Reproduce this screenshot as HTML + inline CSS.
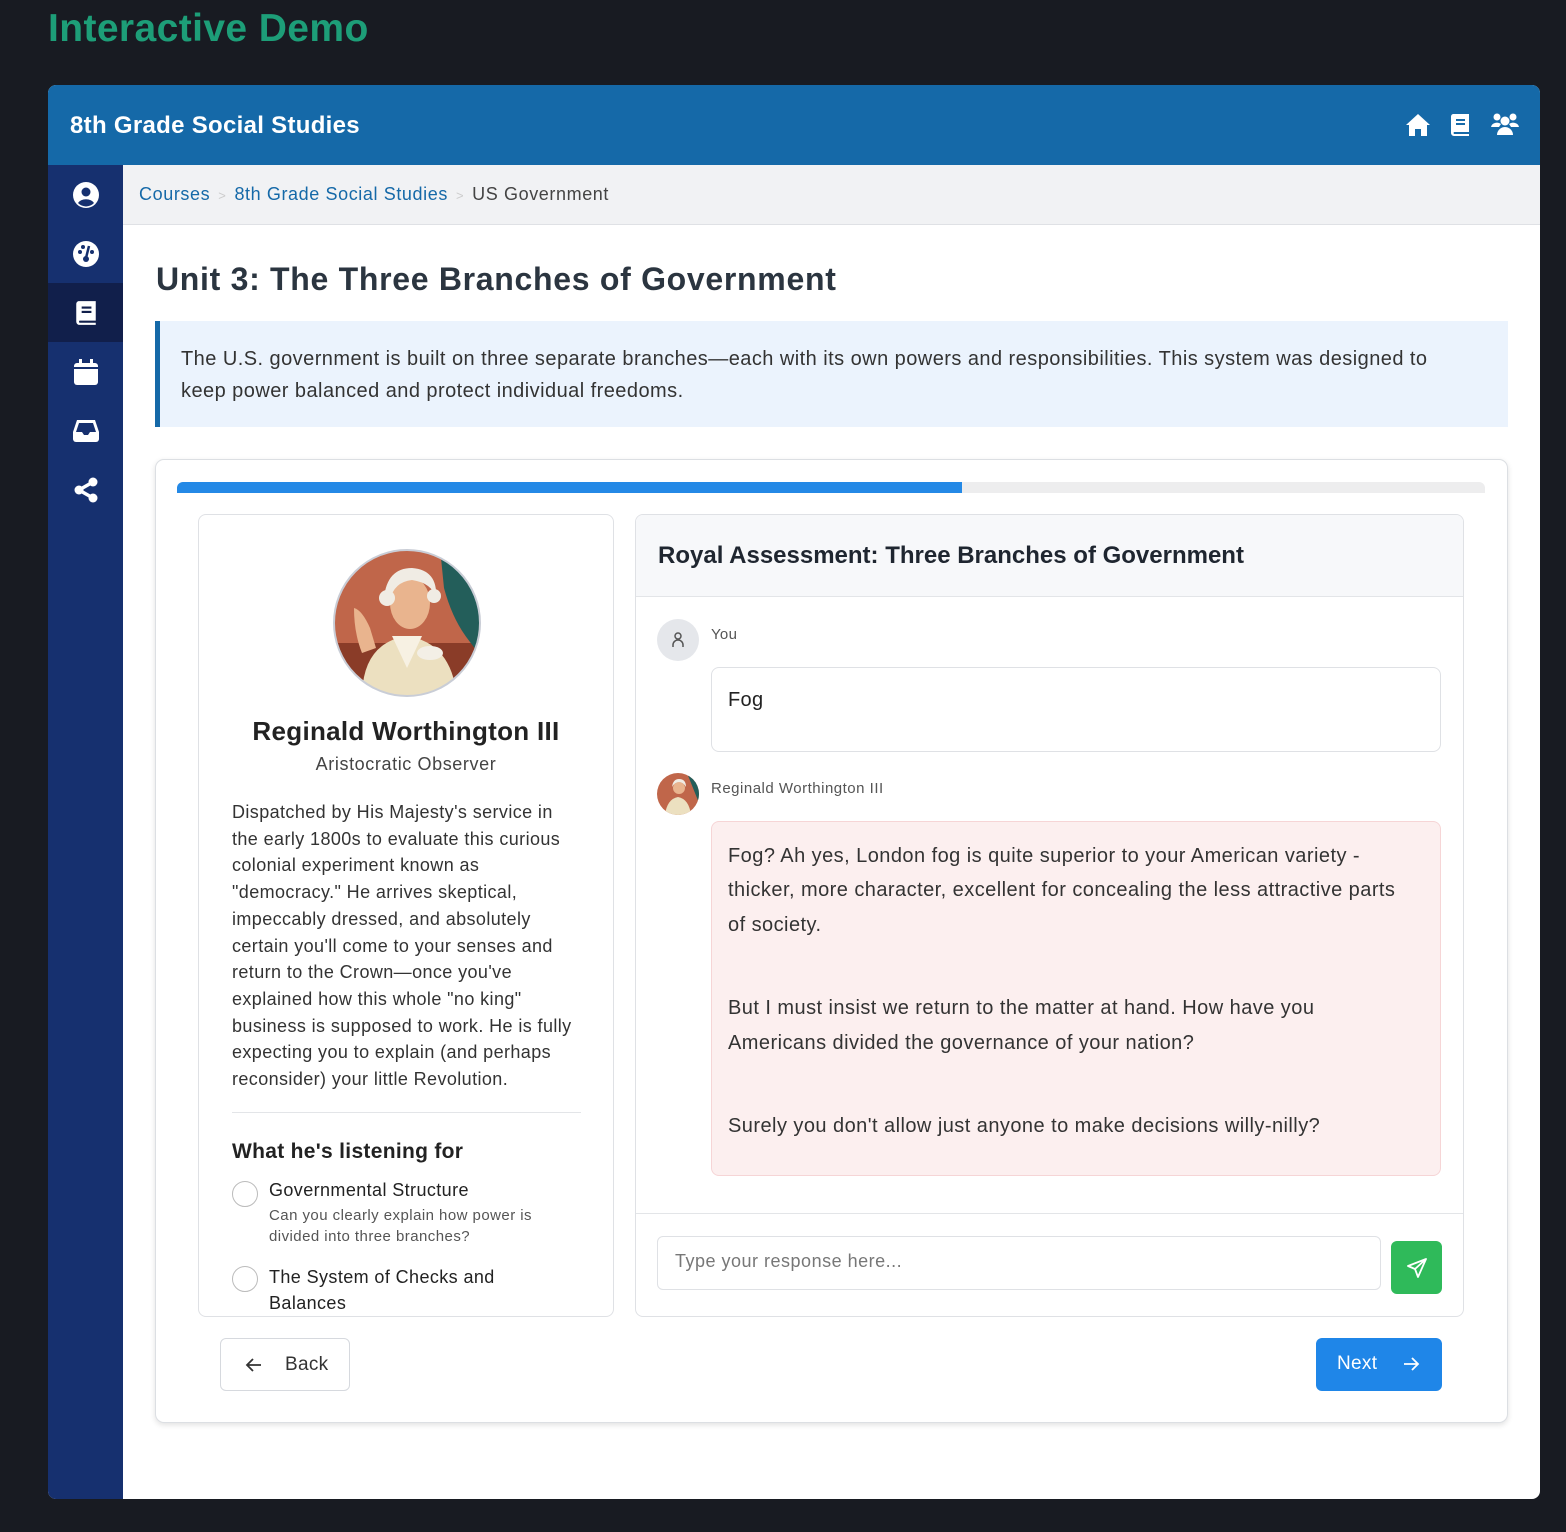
<!DOCTYPE html>
<html><head><meta charset="utf-8">
<style>
*{box-sizing:border-box;margin:0;padding:0}
body{width:1566px;height:1532px;background:#181b22;font-family:"Liberation Sans",sans-serif;position:relative;overflow:hidden;color:#2b3440;letter-spacing:0.3px}
.abs{position:absolute}
h1.demo{position:absolute;left:48px;top:7px;font-size:39px;font-weight:bold;color:#1d9e78;letter-spacing:0.4px}
.frame{position:absolute;left:48px;top:85px;width:1492px;height:1414px;background:#fff;border-radius:8px;overflow:hidden}
.hdr{position:absolute;left:0;top:0;width:100%;height:80px;background:#1569a8}
.hdr .t{position:absolute;left:22px;top:27px;color:#fff;font-size:24px;font-weight:bold}
.side{position:absolute;left:0;top:80px;width:75px;height:1334px;background:#16306f}
.side .it{position:absolute;left:0;width:75px;height:59px;display:flex;align-items:center;justify-content:center}
.bc{position:absolute;left:75px;top:80px;right:0;height:60px;background:#f1f2f4;border-bottom:1px solid #dfe1e5;font-size:18px;padding:19px 0 0 16px;color:#444;letter-spacing:0.6px}
.bc a{color:#1569a8;text-decoration:none}
.bc .s{color:#ccc;font-size:13px;margin:0 8px}
.txt{font-size:18px;line-height:26.7px;color:#333;white-space:nowrap}
</style></head><body>
<h1 class="demo">Interactive Demo</h1>
<div class="frame">
 <div class="hdr"><div class="t">8th Grade Social Studies</div>
  <svg class="abs" style="left:1357px;top:28px" width="26" height="24" viewBox="0 0 26 24"><path d="M13 1 L1 12 H4 V23 H10 V16 H16 V23 H22 V12 H25 Z" fill="#fff"/></svg>
  <svg class="abs" style="left:1402px;top:28px" width="20" height="24" viewBox="0 0 20 24"><path d="M3 1 H19 V19 H4 A1.5 1.5 0 0 0 4 21 H19 V23 H4 A3 3 0 0 1 1 20 V4 A3 3 0 0 1 3 1 Z" fill="#fff"/><rect x="6" y="6" width="9" height="2" fill="#1569a8"/><rect x="6" y="10" width="9" height="2" fill="#1569a8"/></svg>
  <svg class="abs" style="left:1443px;top:27px" width="28" height="24" viewBox="0 0 28 24"><circle cx="6" cy="5" r="3.5" fill="#fff"/><circle cx="22" cy="5" r="3.5" fill="#fff"/><circle cx="14" cy="9" r="4.5" fill="#fff"/><path d="M0 15 A6 5 0 0 1 10 12 L8 15 Z M28 15 A6 5 0 0 0 18 12 L20 15Z" fill="#fff"/><path d="M6 23 A8 8 0 0 1 22 23 Z" fill="#fff"/></svg>
 </div>
 <div class="side">
  <div class="it" style="top:0"><svg width="28" height="28" viewBox="0 0 28 28"><circle cx="14" cy="14" r="13" fill="#fff"/><circle cx="14" cy="11" r="4.5" fill="#16306f"/><path d="M6 22 A9 7 0 0 1 22 22 A11 11 0 0 1 6 22Z" fill="#16306f"/></svg></div>
  <div class="it" style="top:59px"><svg width="28" height="28" viewBox="0 0 28 28"><circle cx="14" cy="14" r="13" fill="#fff"/><circle cx="8" cy="12" r="2" fill="#16306f"/><circle cx="11" cy="7" r="2" fill="#16306f"/><circle cx="20" cy="12" r="2" fill="#16306f"/><path d="M17 6 L14 18" stroke="#16306f" stroke-width="2.5"/><circle cx="14" cy="19" r="3" fill="#16306f"/></svg></div>
  <div class="it" style="top:118px;background:#111f4b"><svg width="22" height="26" viewBox="0 0 20 24"><path d="M3 1 H19 V19 H4 A1.5 1.5 0 0 0 4 21 H19 V23 H4 A3 3 0 0 1 1 20 V4 A3 3 0 0 1 3 1 Z" fill="#fff"/><rect x="6" y="6" width="9" height="2" fill="#111f4b"/><rect x="6" y="10" width="9" height="2" fill="#111f4b"/></svg></div>
  <div class="it" style="top:177px"><svg width="24" height="26" viewBox="0 0 24 26"><rect x="0" y="4" width="24" height="22" rx="3" fill="#fff"/><rect x="5" y="0" width="3" height="6" fill="#fff"/><rect x="16" y="0" width="3" height="6" fill="#fff"/><rect x="0" y="8" width="24" height="2" fill="#16306f"/></svg></div>
  <div class="it" style="top:236px"><svg width="28" height="24" viewBox="0 0 28 24"><path d="M5 1 H23 L27 13 V20 A3 3 0 0 1 24 23 H4 A3 3 0 0 1 1 20 V13 Z" fill="#fff"/><path d="M7 4 H21 L24 13 H18 L16 16 H12 L10 13 H4 Z" fill="#16306f"/></svg></div>
  <div class="it" style="top:295px"><svg width="26" height="26" viewBox="0 0 26 26"><path d="M20 5 L6 13 L20 21" stroke="#fff" stroke-width="3.5" fill="none"/><circle cx="20" cy="5" r="4.5" fill="#fff"/><circle cx="6" cy="13" r="4.5" fill="#fff"/><circle cx="20" cy="21" r="4.5" fill="#fff"/></svg></div>
 </div>
 <div class="bc"><a>Courses</a><span class="s">&gt;</span><a>8th Grade Social Studies</a><span class="s">&gt;</span>US Government</div>
</div>

<div class="abs" style="left:156px;top:261px;font-size:32px;font-weight:bold;color:#2b3540;letter-spacing:0.7px">Unit 3: The Three Branches of Government</div>
<div class="abs" style="left:155px;top:321px;width:1353px;height:106px;background:#ebf3fd;border-left:5px solid #1569a8;padding:22px 0 0 21px;font-size:20px;line-height:32px;color:#333;white-space:nowrap;letter-spacing:0.45px">The U.S. government is built on three separate branches—each with its own powers and responsibilities. This system was designed to<br>keep power balanced and protect individual freedoms.</div>

<div class="abs" style="left:155px;top:459px;width:1353px;height:964px;border:1px solid #dcdfe3;border-radius:9px;box-shadow:0 2px 6px rgba(0,0,0,.12);background:#fff"></div>
<div class="abs" style="left:177px;top:482px;width:1308px;height:11px;background:#ededee;border-radius:6px 6px 0 0;overflow:hidden"><div style="width:785px;height:11px;background:#2489e6"></div></div>

<!-- left panel -->
<div class="abs" style="left:198px;top:514px;width:416px;height:803px;border:1px solid #dfe1e5;border-radius:8px;overflow:hidden">
 <svg class="abs" style="left:133px;top:33px" width="150" height="150" viewBox="0 0 150 150">
  <defs><clipPath id="c"><circle cx="75" cy="75" r="73"/></clipPath></defs>
  <g clip-path="url(#c)">
   <rect width="150" height="150" fill="#c0664a"/>
   <rect x="0" y="95" width="150" height="55" fill="#8a3c28"/>
   <path d="M108 0 H150 V110 L135 90 Q120 70 112 40 Z" fill="#235e5a"/>
   <path d="M30 150 Q30 95 75 88 Q120 95 125 150 Z" fill="#ece0c0"/>
   <path d="M60 88 L75 120 L90 88 Z" fill="#f7f1e3"/>
   <ellipse cx="78" cy="55" rx="20" ry="26" fill="#e9b48e"/>
   <path d="M52 50 Q55 20 80 20 Q106 22 104 50 Q100 35 80 32 Q62 34 58 52 Z" fill="#f0ece4"/>
   <circle cx="55" cy="50" r="8" fill="#f0ece4"/><circle cx="102" cy="48" r="7" fill="#f0ece4"/>
   <path d="M22 60 Q30 62 38 80 L44 100 L30 105 Q22 85 22 60Z" fill="#e9b48e"/>
   <ellipse cx="98" cy="105" rx="13" ry="7" fill="#f3efe6"/>
  </g>
  <circle cx="75" cy="75" r="73" fill="none" stroke="#c9cdd6" stroke-width="2"/>
 </svg>
 <div class="abs" style="left:0;width:414px;top:201px;text-align:center;font-size:26px;font-weight:bold;color:#222">Reginald Worthington III</div>
 <div class="abs" style="left:0;width:414px;top:239px;text-align:center;font-size:18px;color:#444;letter-spacing:0.6px">Aristocratic Observer</div>
 <div class="abs txt" style="left:33px;top:284px;letter-spacing:0.4px">Dispatched by His Majesty's service in<br>the early 1800s to evaluate this curious<br>colonial experiment known as<br>"democracy." He arrives skeptical,<br>impeccably dressed, and absolutely<br>certain you'll come to your senses and<br>return to the Crown—once you've<br>explained how this whole "no king"<br>business is supposed to work. He is fully<br>expecting you to explain (and perhaps<br>reconsider) your little Revolution.</div>
 <div class="abs" style="left:33px;top:597px;width:349px;height:1px;background:#e3e5e8"></div>
 <div class="abs" style="left:33px;top:625px;font-size:21px;font-weight:bold;color:#222">What he's listening for</div>
 <div class="abs" style="left:33px;top:666px;width:26px;height:26px;border:1.5px solid #bbb;border-radius:50%"></div>
 <div class="abs" style="left:70px;top:665px;font-size:18px;color:#222;letter-spacing:0.4px">Governmental Structure</div>
 <div class="abs" style="left:70px;top:690px;font-size:15px;line-height:21px;color:#555;white-space:nowrap;letter-spacing:0.45px">Can you clearly explain how power is<br>divided into three branches?</div>
 <div class="abs" style="left:33px;top:751px;width:26px;height:26px;border:1.5px solid #bbb;border-radius:50%"></div>
 <div class="abs" style="left:70px;top:749px;font-size:18px;line-height:26px;color:#222;white-space:nowrap;letter-spacing:0.4px">The System of Checks and<br>Balances</div>
</div>

<!-- right panel -->
<div class="abs" style="left:635px;top:514px;width:829px;height:803px;border:1px solid #dfe1e5;border-radius:8px;overflow:hidden">
 <div class="abs" style="left:0;top:0;width:100%;height:82px;background:#f7f8fa;border-bottom:1px solid #e3e5e8"></div>
 <div class="abs" style="left:22px;top:27px;font-size:24px;font-weight:bold;color:#1f2630;letter-spacing:0">Royal Assessment: Three Branches of Government</div>
 <div class="abs" style="left:21px;top:104px;width:42px;height:42px;border-radius:50%;background:#e5e7eb"><svg style="margin:12px 0 0 14px" width="14" height="18" viewBox="0 0 14 18"><circle cx="7" cy="5" r="3" fill="none" stroke="#555" stroke-width="1.5"/><path d="M2 16 V14 A5 5 0 0 1 12 14 V16" fill="none" stroke="#555" stroke-width="1.5"/></svg></div>
 <div class="abs" style="left:75px;top:111px;font-size:15px;color:#555">You</div>
 <div class="abs" style="left:75px;top:152px;width:730px;height:85px;border:1px solid #dfe1e5;border-radius:8px;padding:21px 16px;font-size:20px;color:#222">Fog</div>
 <svg class="abs" style="left:21px;top:258px" width="42" height="42" viewBox="0 0 42 42"><clipPath id="c2"><circle cx="21" cy="21" r="21"/></clipPath><g clip-path="url(#c2)"><rect width="42" height="42" fill="#c0664a"/><path d="M30 0 H42 V30 Z" fill="#235e5a"/><path d="M8 42 Q10 26 21 24 Q32 26 34 42Z" fill="#ece0c0"/><circle cx="22" cy="15" r="6" fill="#e9b48e"/><path d="M15 14 Q16 6 22 6 Q29 6 29 14 Q26 9 22 9 Q18 9 15 14Z" fill="#f0ece4"/></g></svg>
 <div class="abs" style="left:75px;top:265px;font-size:15px;color:#555;letter-spacing:0.5px">Reginald Worthington III</div>
 <div class="abs" style="left:75px;top:306px;width:730px;height:355px;background:#fcefef;border:1px solid #f6d5d6;border-radius:8px;padding:17px 0 0 16px;font-size:20px;line-height:34.4px;color:#333;white-space:nowrap;letter-spacing:0.45px">
  <p>Fog? Ah yes, London fog is quite superior to your American variety -<br>thicker, more character, excellent for concealing the less attractive parts<br>of society.</p>
  <p style="margin-top:49px">But I must insist we return to the matter at hand. How have you<br>Americans divided the governance of your nation?</p>
  <p style="margin-top:49px">Surely you don't allow just anyone to make decisions willy-nilly?</p>
 </div>
 <div class="abs" style="left:0;top:698px;width:100%;height:1px;background:#e3e5e8"></div>
 <div class="abs" style="left:21px;top:721px;width:724px;height:54px;border:1px solid #dfe1e5;border-radius:6px;padding:14px 17px;font-size:18px;color:#777;letter-spacing:0.5px">Type your response here...</div>
 <div class="abs" style="left:755px;top:726px;width:51px;height:53px;background:#2fba5a;border-radius:6px"><svg style="margin:16px 0 0 15px" width="22" height="22" viewBox="0 0 22 22"><path d="M20 2 L2 9 L9 12 L12 20 Z M20 2 L9 12" fill="none" stroke="#fff" stroke-width="1.8" stroke-linejoin="round"/></svg></div>
</div>

<div class="abs" style="left:220px;top:1338px;width:130px;height:53px;border:1px solid #d6d9de;border-radius:6px;font-size:19px;color:#333;padding:15px 0 0 64px">Back
 <svg class="abs" style="left:24px;top:18px" width="18" height="16" viewBox="0 0 18 16"><path d="M16 8 H2 M8 2 L2 8 L8 14" fill="none" stroke="#333" stroke-width="1.8"/></svg></div>
<div class="abs" style="left:1316px;top:1338px;width:126px;height:53px;background:#1f86e8;border-radius:6px;font-size:19px;color:#fff;padding:15px 0 0 21px">Next
 <svg class="abs" style="left:86px;top:18px" width="18" height="16" viewBox="0 0 18 16"><path d="M2 8 H16 M10 2 L16 8 L10 14" fill="none" stroke="#fff" stroke-width="1.8"/></svg></div>
</body></html>
